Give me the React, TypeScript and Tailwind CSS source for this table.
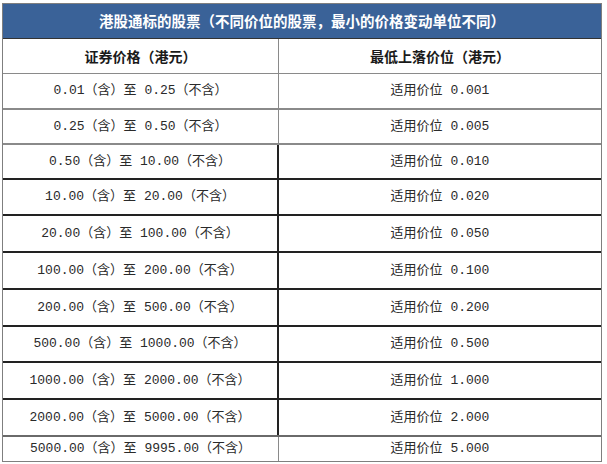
const rows: { range: string; tick: string; h: string; line: string }[] = [
  { range: "0.01（含）至 0.25（不含）", tick: "0.001", h: "h-[36px]", line: "border-[#8a8a8a]" },
  { range: "0.25（含）至 0.50（不含）", tick: "0.005", h: "h-[35px]", line: "border-[#8a8a8a]" },
  { range: "0.50（含）至 10.00（不含）", tick: "0.010", h: "h-[35px]", line: "border-[#222]" },
  { range: "10.00（含）至 20.00（不含）", tick: "0.020", h: "h-[36px]", line: "border-[#222]" },
  { range: "20.00（含）至 100.00（不含）", tick: "0.050", h: "h-[37px]", line: "border-[#222]" },
  { range: "100.00（含）至 200.00（不含）", tick: "0.100", h: "h-[37px]", line: "border-[#222]" },
  { range: "200.00（含）至 500.00（不含）", tick: "0.200", h: "h-[37px]", line: "border-[#222]" },
  { range: "500.00（含）至 1000.00（不含）", tick: "0.500", h: "h-[36px]", line: "border-[#222]" },
  { range: "1000.00（含）至 2000.00（不含）", tick: "1.000", h: "h-[37px]", line: "border-[#222]" },
  { range: "2000.00（含）至 5000.00（不含）", tick: "2.000", h: "h-[37px]", line: "border-[#6a6a6a]" },
  { range: "5000.00（含）至 9995.00（不含）", tick: "5.000", h: "h-[24px]", line: "border-[#8a8a8a]" },
];

export default function App() {
  return (
    <div className="min-h-[464px] bg-white pl-[2px] pt-[3px] font-['Liberation_Mono','Noto_Sans_CJK_SC',monospace] text-[13px] text-[#2a2a2a]">
      <div className="flex w-[600px] flex-col border border-[#7f7f7f]">
        <div className="flex h-[35px] items-center justify-center border-b border-[#333] bg-[#3a6298] font-['Noto_Sans_CJK_SC',sans-serif] text-[14.5px] font-bold text-white">
          港股通标的股票（不同价位的股票，最小的价格变动单位不同）
        </div>
        <div className="flex h-[35px] border-b border-[#8a8a8a] font-['Noto_Sans_CJK_SC',sans-serif] text-[14px] font-bold text-[#1a1a1a]">
          <div className="flex w-[276px] items-center justify-center border-r border-[#8a8a8a]">证券价格（港元）</div>
          <div className="flex flex-1 items-center justify-center">最低上落价位（港元）</div>
        </div>
        {rows.map((r, i) => (
          <div
            key={r.range}
            className={`flex ${r.h} ${i < rows.length - 1 ? "border-b-2" : ""} ${r.line}`}
          >
            <div
              className={`flex w-[276px] items-center justify-center ${
                i >= 2 && i < 10 ? "border-r-2 border-[#222]" : "border-r border-[#8a8a8a]"
              }`}
            >
              {r.range}
            </div>
            <div className="flex flex-1 items-center justify-center">适用价位 {r.tick}</div>
          </div>
        ))}
      </div>
    </div>
  );
}
